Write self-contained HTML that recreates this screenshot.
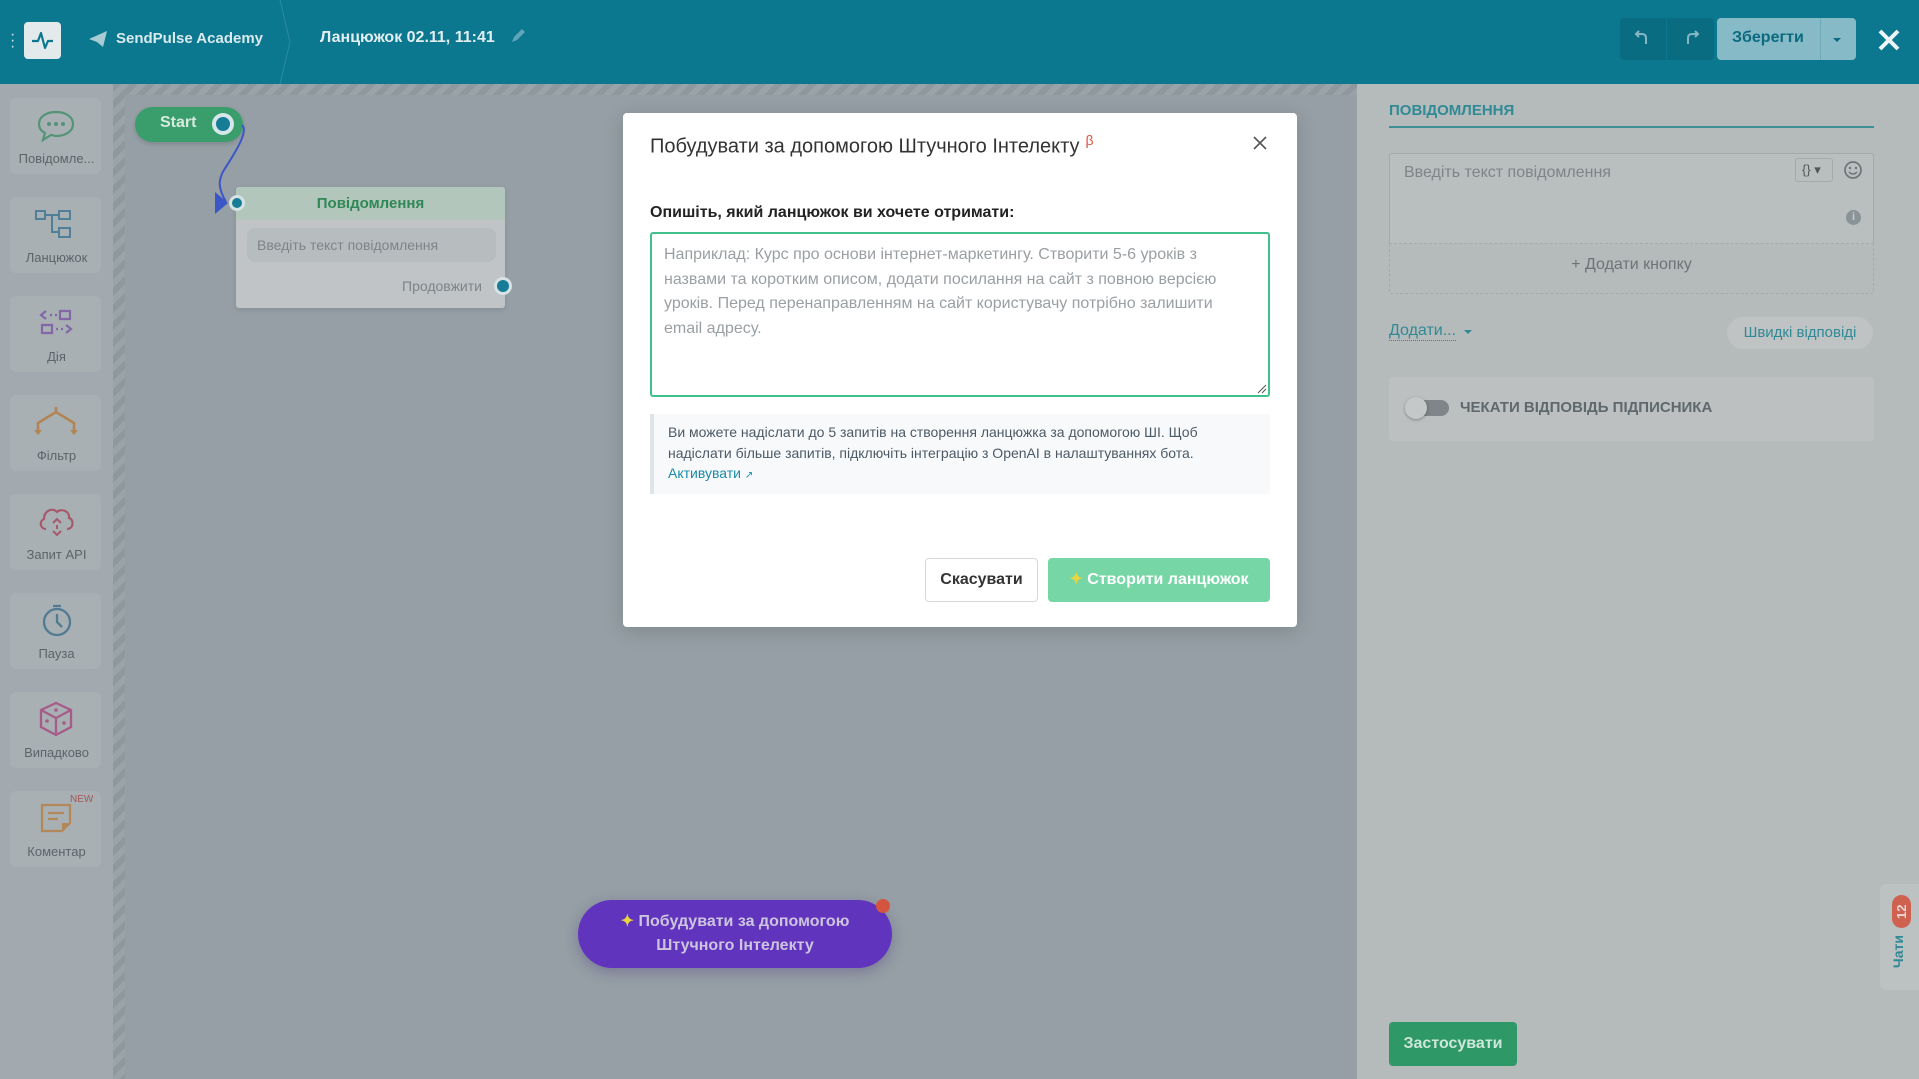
<!DOCTYPE html>
<html><head><meta charset="utf-8"><style>
*{box-sizing:border-box;margin:0;padding:0}
body{width:1919px;height:1079px;overflow:hidden;position:relative;font-family:"Liberation Sans",sans-serif;background:#959fa5}
.a{position:absolute}
.hdr{left:0;top:0;width:1919px;height:84px;background:#0c7890}
.side{left:0;top:84px;width:113px;height:995px;background:#a2aaaf}
.hatch{left:113px;top:84px;width:12px;height:995px;background:repeating-linear-gradient(135deg,#8e989e 0 6px,#9aa3a8 6px 12px)}
.hatch2{left:113px;top:84px;width:1244px;height:11px;background:repeating-linear-gradient(135deg,#8e989e 0 6px,#9aa3a8 6px 12px)}
.card{left:10px;width:91px;height:76px;background:#a8b0b4;border-radius:6px}
.lbl{width:113px;left:0;text-align:center;font-size:13px;color:#5c6468}
svg.si{opacity:.8}
.rp{left:1357px;top:84px;width:562px;height:995px;background:#b5babb}
.modal{left:623px;top:113px;width:674px;height:514px;background:#fff;border-radius:4px;box-shadow:0 4px 20px rgba(0,0,0,.15)}
</style></head><body>
<div class="a hdr"></div>
<div class="a" style="left:10px;top:32px;width:4px;height:18px;color:#cfe3e8;font-size:16px;line-height:6px">·<br>·<br>·</div>
<div class="a" style="left:24px;top:22px;width:37px;height:37px;background:#e3eaec;border-radius:4px"></div>
<svg class="a" style="left:24px;top:22px" width="37" height="37"><path d="M8 19h6l3-8 4 15 3-7h5" fill="none" stroke="#0c7890" stroke-width="2.2" stroke-linejoin="round"/></svg>
<svg class="a" style="left:88px;top:30px" width="20" height="18"><path d="M1 9 19 1 15 17 9 12Z" fill="#a9cbd4"/></svg>
<div class="a" style="left:116px;top:30px;font-size:15px;font-weight:bold;color:#d9eaee">SendPulse Academy</div>
<svg class="a" style="left:278px;top:0" width="16" height="84"><path d="M2 0 12 42 2 84" fill="none" stroke="#2a8aa0" stroke-width="1"/></svg>
<div class="a" style="left:320px;top:29px;font-size:16px;font-weight:bold;color:#e2eef1">Ланцюжок 02.11, 11:41</div>
<svg class="a" style="left:510px;top:28px" width="16" height="16"><path d="M2 14 4 9 12 1 15 4 7 12Z" fill="#5fa7b8"/></svg>
<div class="a" style="left:1620px;top:18px;width:94px;height:42px;background:#0a6c81;border-radius:4px"></div>
<div class="a" style="left:1666px;top:18px;width:1px;height:42px;background:#0b7890"></div>
<svg class="a" style="left:1632px;top:28px" width="70" height="22"><path d="M14 16V10Q14 6 10 6H4M7 3 4 6 7 9" fill="none" stroke="#84b6c3" stroke-width="2"/><path d="M56 16V10Q56 6 60 6H66M63 3 66 6 63 9" fill="none" stroke="#84b6c3" stroke-width="2"/></svg>
<div class="a" style="left:1717px;top:18px;width:139px;height:42px;background:#86bac6;border-radius:4px"></div>
<div class="a" style="left:1820px;top:18px;width:1px;height:42px;background:#6ea9b7"></div>
<div class="a" style="left:1732px;top:29px;font-size:16px;font-weight:bold;color:#0c6a80">Зберегти</div>
<div class="a" style="left:1833px;top:38px;border:4px solid transparent;border-top:4px solid #0c6a80"></div>
<svg class="a" style="left:1877px;top:28px" width="24" height="24"><path d="M3 3 21 21M21 3 3 21" stroke="#eef5f7" stroke-width="4"/></svg>

<div class="a side"></div>
<div class="a hatch"></div><div class="a hatch2"></div>

<div class="a card" style="top:98px"></div><div class="a card" style="top:197px"></div><div class="a card" style="top:296px"></div><div class="a card" style="top:395px"></div><div class="a card" style="top:494px"></div><div class="a card" style="top:593px"></div><div class="a card" style="top:692px"></div><div class="a card" style="top:791px"></div>
<svg class="a si" style="left:36px;top:110px" width="40" height="32"><path d="M20 2C10 2 3 7 3 14c0 4 2 7 6 9l-2 7 8-5c2 0 3 1 5 1 10 0 17-5 17-12S30 2 20 2Z" fill="none" stroke="#3e8e6a" stroke-width="2.2"/><circle cx="13" cy="14" r="2" fill="#3e8e6a"/><circle cx="20" cy="14" r="2" fill="#3e8e6a"/><circle cx="27" cy="14" r="2" fill="#3e8e6a"/></svg>
<svg class="a si" style="left:34px;top:208px" width="44" height="32"><g fill="none" stroke="#3b7590" stroke-width="2"><rect x="2" y="3" width="9" height="8"/><rect x="25" y="3" width="11" height="8"/><rect x="25" y="20" width="11" height="9"/><path d="M11 7h14M18 7v17h7"/></g></svg>
<svg class="a si" style="left:38px;top:307px" width="36" height="30"><g fill="none" stroke="#7a56a3" stroke-width="2.2"><path d="M8 4 3 8 8 12M12 8h2M17 8h2M22 4h10v8H22ZM4 18h10v8H4ZM18 22h2M23 22h2M28 18l5 4-5 4"/></g></svg>
<svg class="a si" style="left:34px;top:405px" width="44" height="32"><g fill="none" stroke="#b57a3a" stroke-width="2.5"><path d="M22 2v5M22 7 4 18v7M22 7l18 11v7"/></g><path d="M0 25h8l-4 5ZM36 25h8l-4 5Z" fill="#b57a3a"/></svg>
<svg class="a si" style="left:36px;top:503px" width="40" height="36"><path d="M10 26C4 26 3 18 8 16 8 8 16 4 21 9c4-4 13-1 12 6 5 1 5 11-2 11" fill="none" stroke="#a6445a" stroke-width="2.2"/><path d="M17 20l4-4 4 4M17 28l4 4 4-4M21 22v4" fill="none" stroke="#a6445a" stroke-width="2"/></svg>
<svg class="a si" style="left:40px;top:603px" width="34" height="34"><circle cx="17" cy="19" r="13" fill="none" stroke="#3b6f8b" stroke-width="2.3"/><path d="M13 3h8M17 11v8l5 5" fill="none" stroke="#3b6f8b" stroke-width="2.3"/></svg>
<svg class="a si" style="left:38px;top:701px" width="36" height="36"><g fill="none" stroke="#a6477e" stroke-width="2.3"><path d="M18 2 33 9v17L18 34 3 26V9Z M3 9l15 8 15-8M18 17v17"/></g><circle cx="18" cy="9" r="1.8" fill="#a6477e"/><circle cx="9" cy="20" r="1.8" fill="#a6477e"/><circle cx="26" cy="22" r="1.8" fill="#a6477e"/></svg>
<div class="a" style="left:70px;top:794px;font-size:10px;color:#a35a5a">NEW</div>
<svg class="a si" style="left:40px;top:803px" width="32" height="30"><path d="M2 2h28v18l-8 8H2Z" fill="none" stroke="#b57f45" stroke-width="2.3"/><path d="M8 10h16M8 16h10" stroke="#b57f45" stroke-width="2.3"/><path d="M22 28v-8h8Z" fill="#b57f45"/></svg>
<div class="a lbl" style="top:151px">Повідомле...</div>
<div class="a lbl" style="top:250px">Ланцюжок</div>
<div class="a lbl" style="top:349px">Дія</div>
<div class="a lbl" style="top:448px">Фільтр</div>
<div class="a lbl" style="top:547px">Запит API</div>
<div class="a lbl" style="top:646px">Пауза</div>
<div class="a lbl" style="top:745px">Випадково</div>
<div class="a lbl" style="top:844px">Коментар</div>

<!-- canvas -->
<div class="a" style="left:135px;top:107px;width:108px;height:35px;background:#3a9e6c;border-radius:18px;box-shadow:0 2px 5px rgba(0,0,0,.15)"></div>
<div class="a" style="left:160px;top:114px;font-size:16px;font-weight:bold;color:#d7eadf">Start</div>
<div class="a" style="left:212px;top:113px;width:22px;height:22px;border-radius:50%;background:#d7e6e8"></div>
<div class="a" style="left:216px;top:117px;width:14px;height:14px;border-radius:50%;background:#177c95"></div>
<svg class="a" style="left:200px;top:120px" width="60" height="100"><path d="M42 5C50 12 30 40 24 50 18 60 18 68 26 82" fill="none" stroke="#3b56c7" stroke-width="2"/><path d="M15 72 28 83 15 94Z" fill="#3b56c7"/></svg>
<div class="a" style="left:236px;top:187px;width:269px;height:121px;background:#c0c4c6;border-radius:3px;box-shadow:0 2px 6px rgba(0,0,0,.1)"></div>
<div class="a" style="left:236px;top:187px;width:269px;height:33px;background:#b2c6bb;border-radius:3px 3px 0 0;text-align:center;font-size:15px;font-weight:bold;color:#2f8856;line-height:33px">Повідомлення</div>
<div class="a" style="left:247px;top:228px;width:249px;height:34px;background:#b7bcbf;border-radius:8px;padding-left:10px;font-size:14px;line-height:34px;color:#7d8488">Введіть текст повідомлення</div>
<div class="a" style="left:402px;top:278px;font-size:14px;color:#7d8488">Продовжити</div>
<div class="a" style="left:229px;top:195px;width:16px;height:16px;border-radius:50%;background:#d7e2e4"></div><div class="a" style="left:232px;top:198px;width:10px;height:10px;border-radius:50%;background:#177c95"></div>
<div class="a" style="left:494px;top:277px;width:18px;height:18px;border-radius:50%;background:#d7e2e4"></div><div class="a" style="left:497px;top:280px;width:12px;height:12px;border-radius:50%;background:#177c95"></div>

<div class="a" style="left:578px;top:900px;width:314px;height:68px;background:#6134be;border-radius:34px;box-shadow:0 4px 14px rgba(60,30,120,.3)"></div>
<div class="a" style="left:876px;top:899px;width:14px;height:14px;border-radius:50%;background:#d4553f"></div>
<div class="a" style="left:578px;top:910px;width:314px;text-align:center;font-size:16px;font-weight:bold;color:#cdc5df;line-height:24px"><span style="color:#e8d63a">✦</span> Побудувати за допомогою<br>Штучного Інтелекту</div>

<!-- right panel -->
<div class="a rp"></div>
<div class="a" style="left:1389px;top:102px;font-size:15px;font-weight:bold;color:#2f8a95">ПОВІДОМЛЕННЯ</div>
<div class="a" style="left:1389px;top:126px;width:485px;height:2px;background:#3f8f99"></div>
<div class="a" style="left:1389px;top:153px;width:485px;height:141px;border:1px dashed #a3aaac;border-radius:3px"></div>
<div class="a" style="left:1389px;top:153px;width:485px;height:91px;border:1px solid #a3aaac;border-bottom:1px dashed #a3aaac;border-radius:3px 3px 0 0;background:#b9bebf"></div>
<div class="a" style="left:1404px;top:164px;font-size:16px;color:#7e8588">Введіть текст повідомлення</div>
<div class="a" style="left:1795px;top:158px;width:38px;height:24px;border:1px solid #a3aaac;border-radius:3px;font-size:13px;color:#555;padding:3px 0 0 6px">{} ▾</div>
<svg class="a" style="left:1843px;top:160px" width="20" height="20"><circle cx="10" cy="10" r="8" fill="none" stroke="#6e7578" stroke-width="1.7"/><circle cx="7" cy="8" r="1.2" fill="#6e7578"/><circle cx="13" cy="8" r="1.2" fill="#6e7578"/><path d="M6 12q4 4 8 0" fill="none" stroke="#6e7578" stroke-width="1.5"/></svg>
<div class="a" style="left:1846px;top:210px;width:15px;height:15px;border-radius:50%;background:#8a9498;color:#c7cdcf;font-size:11px;font-weight:bold;text-align:center;line-height:15px">i</div>
<div class="a" style="left:1389px;top:256px;width:485px;text-align:center;font-size:16px;color:#6d7477">+ Додати кнопку</div>
<div class="a" style="left:1389px;top:322px;font-size:16px;color:#2f8a95;border-bottom:1px dotted #2f8a95">Додати...</div>
<div class="a" style="left:1464px;top:330px;border:4px solid transparent;border-top:4px solid #2f8a95"></div>
<div class="a" style="left:1727px;top:317px;width:146px;height:32px;background:#bfc3c4;border-radius:16px;font-size:15px;color:#2f8a95;text-align:center;line-height:32px">Швидкі відповіді</div>
<div class="a" style="left:1389px;top:377px;width:485px;height:64px;background:#bcc0c1;border-radius:4px"></div>
<div class="a" style="left:1410px;top:400px;width:39px;height:16px;background:#7f8588;border-radius:8px"></div>
<div class="a" style="left:1405px;top:397px;width:22px;height:22px;background:#c4c8c9;border-radius:50%;box-shadow:0 1px 3px rgba(0,0,0,.3)"></div>
<div class="a" style="left:1460px;top:399px;font-size:15px;font-weight:bold;color:#5f686c">ЧЕКАТИ ВІДПОВІДЬ ПІДПИСНИКА</div>
<div class="a" style="left:1389px;top:1022px;width:128px;height:44px;background:#2e9966;border-radius:4px;font-size:16px;font-weight:bold;color:#cfe6da;text-align:center;line-height:44px">Застосувати</div>
<div class="a" style="left:1880px;top:884px;width:39px;height:106px;background:#bcc1c2;border-radius:6px 0 0 6px"></div>
<div class="a" style="left:1892px;top:895px;width:19px;height:33px;background:#cf6150;border-radius:10px"></div>
<div class="a" style="left:1892px;top:895px;width:19px;height:33px;color:#e8d6d2;font-size:13px;font-weight:bold;writing-mode:vertical-rl;transform:rotate(180deg);text-align:center;line-height:19px">12</div>
<div class="a" style="left:1890px;top:935px;font-size:14px;font-weight:bold;color:#2f8a95;writing-mode:vertical-rl;transform:rotate(180deg)">Чати</div>

<!-- modal -->
<div class="a modal"></div>
<div class="a" style="left:650px;top:132px;font-size:20px;color:#333">Побудувати за допомогою Штучного Інтелекту<sup style="color:#e0523d;font-size:14px;margin-left:6px">β</sup></div>
<svg class="a" style="left:1253px;top:136px" width="14" height="14"><path d="M1 1 13 13M13 1 1 13" stroke="#555" stroke-width="1.6"/></svg>
<div class="a" style="left:650px;top:204px;font-size:16px;font-weight:bold;color:#222">Опишіть, який ланцюжок ви хочете отримати:</div>
<div class="a" style="left:650px;top:232px;width:620px;height:165px;border:2px solid #40c08a;border-radius:3px;padding:9px 24px 9px 12px;font-size:16px;line-height:24.5px;color:#9a9fa3">Наприклад: Курс про основи інтернет-маркетингу. Створити 5-6 уроків з назвами та коротким описом, додати посилання на сайт з повною версією уроків. Перед перенаправленням на сайт користувачу потрібно залишити email адресу.</div>
<svg class="a" style="left:1257px;top:384px" width="10" height="10"><path d="M1 9 9 1M5 9 9 5" stroke="#555" stroke-width="1"/></svg>
<div class="a" style="left:650px;top:414px;width:620px;height:80px;background:#f7f9fb;border-left:4px solid #dde4ea;padding:8px 14px 0 14px;font-size:14px;line-height:20.5px;color:#4c5a66">Ви можете надіслати до 5 запитів на створення ланцюжка за допомогою ШІ. Щоб надіслати більше запитів, підключіть інтеграцію з OpenAI в налаштуваннях бота.<br><span style="color:#1a8aa8">Активувати <span style="font-size:10px">↗</span></span></div>
<div class="a" style="left:925px;top:558px;width:113px;height:44px;border:1px solid #d5d9dc;border-radius:4px;font-size:16px;font-weight:bold;color:#333;text-align:center;line-height:42px">Скасувати</div>
<div class="a" style="left:1048px;top:558px;width:222px;height:44px;background:#77d6a6;border-radius:4px;font-size:16px;font-weight:bold;color:#fff;text-align:center;line-height:44px"><span style="color:#e8d63a">✦</span> Створити ланцюжок</div>
</body></html>
